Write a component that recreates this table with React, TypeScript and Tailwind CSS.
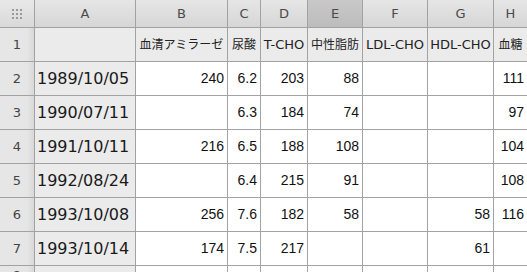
const COLS = ["A", "B", "C", "D", "E", "F", "G", "H"];

const LABELS: { text: string; cjk?: boolean }[] = [
  { text: "" },
  { text: "血清アミラーゼ", cjk: true },
  { text: "尿酸", cjk: true },
  { text: "T-CHO" },
  { text: "中性脂肪", cjk: true },
  { text: "LDL-CHO" },
  { text: "HDL-CHO" },
  { text: "血糖", cjk: true },
];

const ROWS: string[][] = [
  ["1989/10/05", "240", "6.2", "203", "88", "", "", "111"],
  ["1990/07/11", "", "6.3", "184", "74", "", "", "97"],
  ["1991/10/11", "216", "6.5", "188", "108", "", "", "104"],
  ["1992/08/24", "", "6.4", "215", "91", "", "", "108"],
  ["1993/10/08", "256", "7.6", "182", "58", "", "58", "116"],
  ["1993/10/14", "174", "7.5", "217", "", "", "61", ""],
  ["", "", "", "", "", "", "", ""],
];

const sans = "font-['DejaVu_Sans','Noto_Sans_CJK_JP',sans-serif]";
const num = "font-['Liberation_Sans',Arial,sans-serif]";

function Corner() {
  return (
    <div className="flex items-center justify-center bg-gradient-to-b from-[#e8e8e8] to-[#d9d9d9]">
      <div className="grid grid-cols-3 gap-[2px]">
        {Array.from({ length: 9 }).map((_, i) => (
          <span key={i} className="h-[2px] w-[2px] bg-[#9a9a9a]" />
        ))}
      </div>
    </div>
  );
}

function RowHead({ n }: { n: number }) {
  return (
    <div className={`flex items-center justify-center bg-gradient-to-r from-[#e6e6e6] from-80% to-[#d8d8d8] text-[13px] text-[#444] ${sans}`}>
      {n}
    </div>
  );
}

export default function App() {
  return (
    <div className="h-[272px] w-[527px] overflow-hidden bg-white">
      <div className="grid w-max grid-cols-[34px_100px_91px_32px_46px_54px_64px_65px_33px] grid-rows-[27px_repeat(7,33px)] gap-px bg-[#a2a2a2] pb-px">
        <Corner />
        {COLS.map((c) => (
          <div
            key={c}
            className={`flex items-center justify-center text-[13px] text-[#4a4a4a] ${sans} ${
              c === "E"
                ? "bg-gradient-to-b from-[#c9c9c9] to-[#bcbcbc]"
                : "bg-gradient-to-b from-[#e6e6e6] to-[#d6d6d6]"
            }`}
          >
            {c}
          </div>
        ))}

        <RowHead n={1} />
        {LABELS.map((l, i) => (
          <div
            key={i}
            className={`flex items-center justify-center overflow-hidden whitespace-nowrap bg-[#ebebeb] text-[#222] ${sans} ${
              l.cjk ? "text-[12px]" : "text-[13px]"
            }`}
          >
            {l.text}
          </div>
        ))}

        {ROWS.map((row, r) => (
          <div key={r} className="contents">
            <RowHead n={r + 2} />
            {row.map((v, c) =>
              c === 0 ? (
                <div
                  key={c}
                  className={`flex items-center bg-[#ebebeb] pl-[2px] text-[16px] text-[#1a1a1a] ${sans}`}
                >
                  {v}
                </div>
              ) : (
                <div
                  key={c}
                  className={`flex items-center justify-end bg-white pr-[3px] text-[14px] text-[#111] ${num}`}
                >
                  {v}
                </div>
              ),
            )}
          </div>
        ))}
      </div>
    </div>
  );
}
